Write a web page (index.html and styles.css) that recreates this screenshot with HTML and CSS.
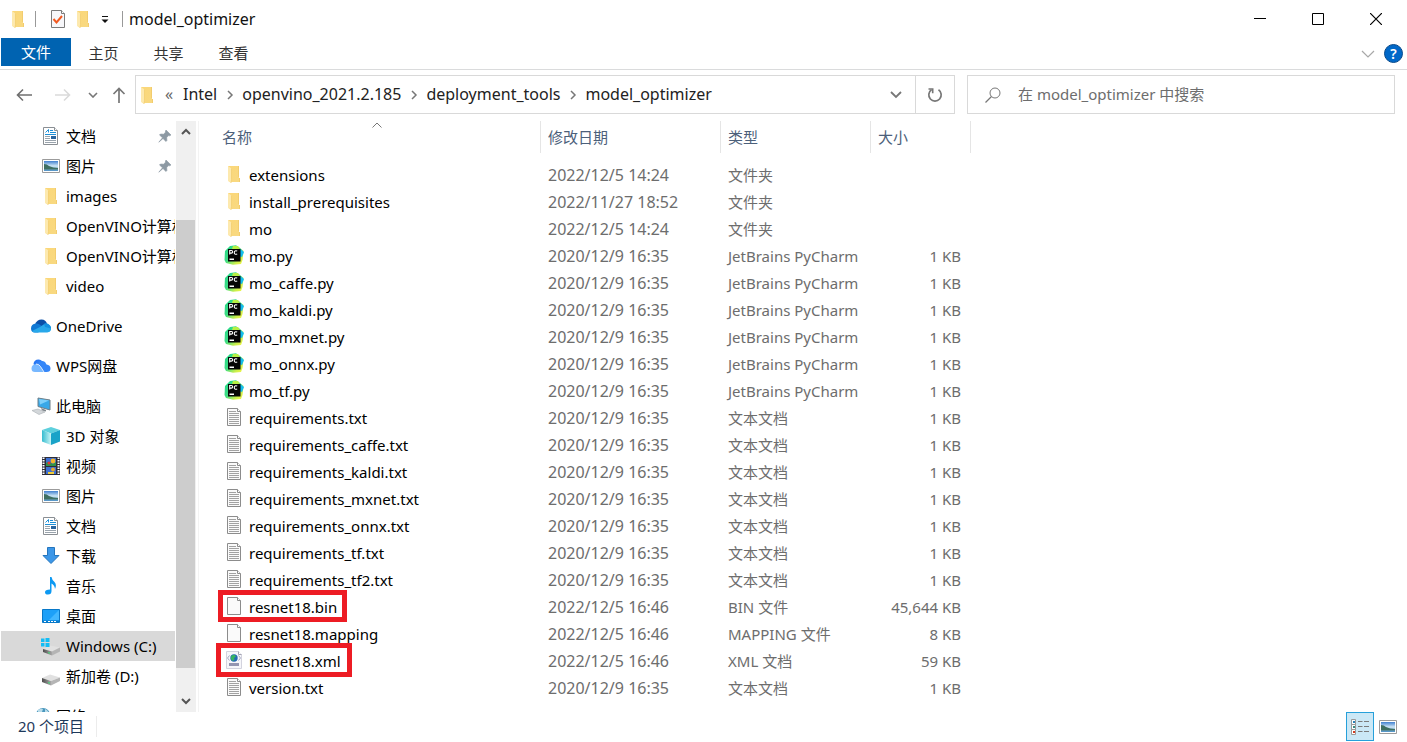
FILE: index.html
```html
<!DOCTYPE html>
<html lang="zh-CN">
<head>
<meta charset="utf-8">
<title>model_optimizer</title>
<link rel="stylesheet" href="styles.css">
</head>
<body>
<svg class="sprite" aria-hidden="true">
  <defs>
    <linearGradient id="g-folder" x1="0" y1="0" x2="1" y2="1"><stop offset="0" stop-color="#fbd778"/><stop offset="1" stop-color="#f8d982"/></linearGradient>
    <linearGradient id="g-sky" x1="0" y1="0" x2="0" y2="1"><stop offset="0" stop-color="#3f7fd0"/><stop offset=".5" stop-color="#cfe6f5"/><stop offset="1" stop-color="#4b8fc4"/></linearGradient>
    <linearGradient id="g-py" x1="0" y1="0" x2="1" y2="1"><stop offset="0" stop-color="#21d789"/><stop offset=".45" stop-color="#3ddc84"/><stop offset=".75" stop-color="#c9ee4b"/><stop offset="1" stop-color="#fcf84a"/></linearGradient>
    <linearGradient id="g-cube" x1="0" y1="0" x2="1" y2="0"><stop offset="0" stop-color="#35bcd0"/><stop offset="1" stop-color="#c9f4f5"/></linearGradient>
    <linearGradient id="g-wps" x1="0" y1="0" x2="1" y2="1"><stop offset="0" stop-color="#1c6cf0"/><stop offset="1" stop-color="#5aa6ff"/></linearGradient>
    <linearGradient id="g-drive" x1="0" y1="0" x2="1" y2="0"><stop offset="0" stop-color="#4b4b4b"/><stop offset="1" stop-color="#a9a9a9"/></linearGradient>
  </defs>
  <symbol id="folder" viewBox="0 0 20 20">
    <path d="M4 2h11v12.500l1 .5v3H5z" fill="url(#g-folder)"/>
    <path d="M14 2h1v11h-1zM15 14h1v4h-1z" fill="#f2cc6e"/>
    <path d="M4 2l3.500 2.500v11L7 19l-3-2z" fill="#fde9ae"/>
    <path d="M7.500 4.500v11L7 19" stroke="#f1cb6b" stroke-width=".7" fill="none"/>
  </symbol>
  <symbol id="txt" viewBox="0 0 20 20">
    <path d="M3.500 1.500h10l3 3v14h-13z" fill="#fafafa" stroke="#8c8c8c"/>
    <path d="M13.500 1.500v3h3" fill="#fff" stroke="#8c8c8c"/>
    <path d="M5 4.500h7M5 6.500h10M5 8.500h10M5 10.500h10M5 12.500h10M5 14.500h10M5 16.500h10" stroke="#a2a2a2"/>
  </symbol>
  <symbol id="blank" viewBox="0 0 20 20">
    <path d="M3.500 1.500h10l3 3v14h-13z" fill="#fafafa" stroke="#8c8c8c"/>
    <path d="M13.500 1.500v3h3" fill="#fff" stroke="#8c8c8c"/>
  </symbol>
  <symbol id="xml" viewBox="0 0 20 20">
    <path d="M2.500 1.500h12l3 3v14h-15z" fill="#f6f6fa" stroke="#d3d3de"/>
    <path d="M14.500 1.500v3h3" fill="#fff" stroke="#a5a5b2"/>
    <path d="M5.500 5.500L3.500 8l2 2.500M14.500 5.500L16.500 8l-2 2.500" stroke="#a5a9c0" fill="none"/>
    <circle cx="10" cy="8" r="3.700" fill="#2368b4"/>
    <path d="M7.500 5.500l3-.8 1.500 1.800-2 1.500.5 2-2 1-1.800-2.500z" fill="#35b560"/>
    <path d="M5 13h10v3H5z" fill="#9495b1"/>
  </symbol>
  <symbol id="py" viewBox="0 0 20 20">
    <path d="M1 6L6 1l6-.8L16 3l3.500 3-1 9L17 19l-8 .8L2 18 .5 15z" fill="url(#g-py)"/>
    <path d="M15 3l5 4-2 5-3-1z" fill="#13bdf0"/>
    <path d="M9 1l5 0 2 3H8z" fill="#b8ef45"/>
    <path d="M4 4h12.500v12.500H4z" fill="#050505"/>
    <path d="M5.700 9.500v-4h1.600q1.400 0 1.400 1.300T7.300 8.100H5.700M13.200 6.100q-2.800-1.100-2.900 1.400t2.900 1.500" stroke="#fff" stroke-width="1.100" fill="none"/>
    <path d="M5.500 13.500H10V15H5.500z" fill="#fff"/>
  </symbol>
  <symbol id="doc" viewBox="0 0 20 20">
    <path d="M2.500 1.500h11l3 3v14h-14z" fill="#fff" stroke="#8a8f94"/>
    <path d="M13.500 1.500v3h3" fill="#fff" stroke="#8a8f94"/>
    <path d="M4.500 6.500L7.500 3.500v3M9 4.500h3M9 6.500h6M4 8.500h11" stroke="#1e90d8" fill="none"/>
    <path d="M4 10.500h5M4 12.500h5M4 14.500h11M4 16.500h11" stroke="#9aa4ad"/>
    <path d="M10 10h5v3h-5z" fill="#28659f"/>
  </symbol>
  <symbol id="pic" viewBox="0 0 20 20">
    <path d="M1.500 3.500h17v13h-17z" fill="#fff" stroke="#9b9b9b"/>
    <path d="M3 5h14v10H3z" fill="url(#g-sky)"/>
    <path d="M3 8q3 0 5 2 4 2 9 2v1.500H3z" fill="#3f6f62"/>
  </symbol>
  <symbol id="onedrive" viewBox="0 0 20 20">
    <path d="M4 8.500Q6 3.500 10.500 3.500T16 8l-5 4z" fill="#0a4fa8"/>
    <path d="M0 12.500Q0 8 5 7.500q2-.5 5 2l5 3-8 4H4Q0 16.500 0 12.500z" fill="#0f78d4"/>
    <path d="M9 11l5-3.500q6 .5 6.200 5 0 4-4 4H4q-2 0-3-1.500z" fill="#28a8ea"/>
    <path d="M13 8q3-2 5.500 1 1.500 1.500 1.500 3.500l-6-1.500z" fill="#1490df"/>
  </symbol>
  <symbol id="wps" viewBox="0 0 20 20">
    <path d="M2.500 8Q3 3.500 7.500 3.500q3 0 4.500 3l3 9.500H8z" fill="url(#g-wps)"/>
    <path d="M7 7.500Q10 3.500 14 6l1.500 2.500q4 .5 4 4t-4 3.500h-3z" fill="#3486f8"/>
    <path d="M.5 12.500Q.5 8.500 5 8q3 0 4.500 2.500L13 16H4Q.5 16 .5 12.500z" fill="#78b8ff"/>
    <path d="M5 8q3 0 4.500 2.500L13 16" fill="none" stroke="#fff" stroke-width=".8"/>
  </symbol>
  <symbol id="pc" viewBox="0 0 20 20">
    <path d="M7 2l12 2v10L7 10.500z" fill="#38a8e8" stroke="#6f7f88"/>
    <path d="M8 3l10 1.500-9 4z" fill="#7fd0fa"/>
    <path d="M10 12l5 2v1.500l-4-1z" fill="#80878c"/>
    <path d="M1 14.500l6-1.500 7 3-6 2.500z" fill="#d3d7da" stroke="#a9afb3" stroke-width=".6"/>
  </symbol>
  <symbol id="cube" viewBox="0 0 20 20">
    <path d="M10 1l9 3-9 3.500L1 4z" fill="#5ed0dd"/>
    <path d="M1 4l9 3.500V19l-9-3.500z" fill="url(#g-cube)"/>
    <path d="M10 7.500L19 4v11.500L10 19z" fill="#1aa3c8"/>
  </symbol>
  <symbol id="film" viewBox="0 0 20 20">
    <path d="M1 1h18v18H1z" fill="#2c2d38"/>
    <path d="M2.500 1.500v18M17.500 1.500v18" stroke="#fff" stroke-width="2" stroke-dasharray="1.500 1"/>
    <path d="M5 2h10v8H5zM5 11h10v7H5z" fill="#3e70d2"/>
    <path d="M5 7q3-2 5 0t5-1v4H5z" fill="#319447"/>
    <circle cx="12" cy="5" r="2.400" fill="#f5b52a"/><circle cx="8" cy="7" r="1.500" fill="#e03c31"/>
    <circle cx="12" cy="13.500" r="2" fill="#e5a82f"/><path d="M7 16h6v2H7z" fill="#f1cd39"/>
  </symbol>
  <symbol id="down" viewBox="0 0 20 20">
    <path d="M6.500 1.500h7v8h4.500l-8 8-8-8h4.500z" fill="#3c97e8" stroke="#2475bd"/>
  </symbol>
  <symbol id="music" viewBox="0 0 20 20">
    <path d="M9 1h1.500q.5 3 3 5 2.500 3 .5 7-.3-4-3.500-5.500V15q0 3.500-3.500 3.500-3 0-3-2.300 0-2.700 5-2.700z" fill="#0d99f2"/>
  </symbol>
  <symbol id="desk" viewBox="0 0 20 20">
    <path d="M1.500 3.500h17v13h-17z" fill="#1da0f8" stroke="#0878c8"/>
    <path d="M18 4v10L8 14z" fill="#42b7ff"/>
    <path d="M2 14.500h16v1.500H2z" fill="#087dce"/><path d="M3 15.500h2M7 15.500h8" stroke="#fff" stroke-dasharray="2 1"/>
  </symbol>
  <symbol id="drive" viewBox="0 0 20 20">
    <path d="M1 12l8-3.500 10 3-9 3.500z" fill="#e1e1e1"/>
    <path d="M1 12l9 3v4.500l-9-3.500z" fill="url(#g-drive)"/>
    <path d="M10 15l9-3.500V15l-9 4.500z" fill="#b5b5b5"/>
    <path d="M7 16l2 .7v1L7 17z" fill="#3be477"/>
  </symbol>
  <symbol id="cdrive" viewBox="0 0 20 20">
    <path d="M2 13l7-3.500 10 2-8 4z" fill="#e1e1e1"/>
    <path d="M2 13l9 2.500v4L2 16z" fill="url(#g-drive)"/>
    <path d="M11 15.500l8-4v4l-8 4z" fill="#b5b5b5"/>
    <path d="M7 16l2 .7v1L7 17z" fill="#3be477"/>
    <path d="M0 2.500h3.500v3.500H0zM4.500 2H8.500v4h-4zM0 7h3.500v3.500H0zM4.500 7h4v4h-4z" fill="#14bdf5"/>
  </symbol>
  <symbol id="net" viewBox="0 0 20 20">
    <circle cx="12" cy="9" r="7" fill="#4a97bd"/>
    <path d="M7 4q3-2 5-1l-1 3-4 3zM14 3q4 2 4.500 6L14 7z" fill="#b9dcea"/>
  </symbol>
  <symbol id="pin" viewBox="0 0 14 14">
    <path d="M8 1l5 5-1.500.8-1-.2-1.800 2 .2 2.900-1 1L5 9.500.8 13.200 4.500 8.800 1.500 6l1-1 3 .2 2-1.900V2z" fill="#8c99a3" stroke="#8c99a3" stroke-width=".6"/>
  </symbol>
  <symbol id="chev-r" viewBox="0 0 8 10"><path d="M2 1l4 4-4 4" fill="none" stroke="#777" stroke-width="1.500"/></symbol>
</svg>

<header class="titlebar">
  <svg class="icon"><use href="#folder"/></svg>
  <span class="rule"></span>
  <button class="quick" aria-label="属性"><svg class="icon" viewBox="0 0 20 20"><path d="M3.500 1.500h10l3 3v14h-13z" fill="#f7f7fa" stroke="#7b7b7b"/><path d="M13.500 1.500v3h3" fill="#fff" stroke="#7b7b7b"/><path d="M5.500 10l3 3.500L14 7" fill="none" stroke="#f15a22" stroke-width="2"/></svg></button>
  <button class="quick" aria-label="新建文件夹"><svg class="icon"><use href="#folder"/></svg></button>
  <button class="quick more" aria-label="自定义快速访问工具栏"><svg width="8" height="8" viewBox="0 0 8 8"><path d="M1 1.500h6" stroke="#111"/><path d="M.5 4.500h7L4 8z" fill="#111"/></svg></button>
  <span class="rule"></span>
  <h1 class="title">model_optimizer</h1>
  <div class="window-buttons">
    <button aria-label="最小化"><svg width="12" height="12" viewBox="0 0 12 12"><path d="M0 5.500h12" stroke="#000"/></svg></button>
    <button aria-label="最大化"><svg width="12" height="12" viewBox="0 0 12 12"><path d="M.5 .5h11v11H.5z" fill="none" stroke="#000"/></svg></button>
    <button aria-label="关闭"><svg width="12" height="12" viewBox="0 0 12 12"><path d="M0 0l12 12M12 0L0 12" stroke="#000" stroke-width="1.200"/></svg></button>
  </div>
</header>

<nav class="ribbon">
  <button class="tab file">文件</button>
  <button class="tab">主页</button>
  <button class="tab">共享</button>
  <button class="tab">查看</button>
  <div class="ribbon-end">
    <button aria-label="展开功能区"><svg width="14" height="8" viewBox="0 0 14 8"><path d="M1 1l6 6 6-6" fill="none" stroke="#a8a8a8" stroke-width="1.200"/></svg></button>
    <button class="help" aria-label="帮助">?</button>
  </div>
</nav>

<div class="location">
  <div class="history">
    <button class="back" aria-label="后退"><svg width="16" height="14" viewBox="0 0 16 14"><path d="M16 7H1.500M7 1.500L1.500 7 7 12.500" fill="none" stroke="#6f6f6f" stroke-width="1.600"/></svg></button>
    <button class="forward" aria-label="前进" disabled><svg width="16" height="14" viewBox="0 0 16 14"><path d="M0 7h14.500M9 1.500L14.500 7 9 12.500" fill="none" stroke="#dadada" stroke-width="1.600"/></svg></button>
    <button class="recent" aria-label="最近位置"><svg width="10" height="6" viewBox="0 0 10 6"><path d="M1 1l4 4 4-4" fill="none" stroke="#777" stroke-width="1.600"/></svg></button>
    <button class="up" aria-label="上移"><svg width="14" height="16" viewBox="0 0 14 16"><path d="M7 16V1.500M1.500 7L7 1.500 12.500 7" fill="none" stroke="#777" stroke-width="1.700"/></svg></button>
  </div>
  <div class="address">
    <svg class="icon"><use href="#folder"/></svg>
    <span class="ellipsis">«</span>
    <a href="#">Intel</a><svg class="chev"><use href="#chev-r"/></svg>
    <a href="#">openvino_2021.2.185</a><svg class="chev"><use href="#chev-r"/></svg>
    <a href="#">deployment_tools</a><svg class="chev"><use href="#chev-r"/></svg>
    <a href="#">model_optimizer</a>
    <button class="drop" aria-label="以前的位置"><svg width="12" height="8" viewBox="0 0 12 8"><path d="M1 1l5 5 5-5" fill="none" stroke="#777" stroke-width="1.800"/></svg></button>
    <button class="refresh" aria-label="刷新"><svg width="16" height="16" viewBox="0 0 16 16"><path d="M11.500 2.800A6.200 6.200 0 1 1 4.500 2.800" fill="none" stroke="#777" stroke-width="1.700"/><path d="M1.500 2h4.200v4.200" fill="none" stroke="#777" stroke-width="1.600"/></svg></button>
  </div>
  <label class="search">
    <svg width="16" height="16" viewBox="0 0 16 16"><circle cx="10" cy="6" r="5" fill="none" stroke="#777"/><path d="M6.500 9.500L.5 15.500" stroke="#777" stroke-width="1.200"/></svg>
    <input type="text" placeholder="在 model_optimizer 中搜索" aria-label="搜索">
  </label>
</div>

<main class="content">
  <aside class="sidebar">
    <ul class="tree">
      <li><a class="sub" href="#"><svg class="icon"><use href="#doc"/></svg><span>文档</span><svg class="pin"><use href="#pin"/></svg></a></li>
      <li><a class="sub" href="#"><svg class="icon"><use href="#pic"/></svg><span>图片</span><svg class="pin"><use href="#pin"/></svg></a></li>
      <li><a class="sub" href="#"><svg class="icon"><use href="#folder"/></svg><span>images</span></a></li>
      <li><a class="sub" href="#"><svg class="icon"><use href="#folder"/></svg><span>OpenVINO计算机</span></a></li>
      <li><a class="sub" href="#"><svg class="icon"><use href="#folder"/></svg><span>OpenVINO计算机</span></a></li>
      <li><a class="sub" href="#"><svg class="icon"><use href="#folder"/></svg><span>video</span></a></li>
      <li class="group"><a href="#"><svg class="icon"><use href="#onedrive"/></svg><span>OneDrive</span></a></li>
      <li class="group"><a href="#"><svg class="icon"><use href="#wps"/></svg><span>WPS网盘</span></a></li>
      <li class="group"><a href="#"><svg class="icon"><use href="#pc"/></svg><span>此电脑</span></a></li>
      <li><a class="sub" href="#"><svg class="icon"><use href="#cube"/></svg><span>3D 对象</span></a></li>
      <li><a class="sub" href="#"><svg class="icon"><use href="#film"/></svg><span>视频</span></a></li>
      <li><a class="sub" href="#"><svg class="icon"><use href="#pic"/></svg><span>图片</span></a></li>
      <li><a class="sub" href="#"><svg class="icon"><use href="#doc"/></svg><span>文档</span></a></li>
      <li><a class="sub" href="#"><svg class="icon"><use href="#down"/></svg><span>下载</span></a></li>
      <li><a class="sub" href="#"><svg class="icon"><use href="#music"/></svg><span>音乐</span></a></li>
      <li><a class="sub" href="#"><svg class="icon"><use href="#desk"/></svg><span>桌面</span></a></li>
      <li><a class="sub selected" href="#"><svg class="icon"><use href="#cdrive"/></svg><span>Windows (C:)</span></a></li>
      <li><a class="sub" href="#"><svg class="icon"><use href="#drive"/></svg><span>新加卷 (D:)</span></a></li>
      <li class="group"><a href="#"><svg class="icon"><use href="#net"/></svg><span>网络</span></a></li>
    </ul>
    <div class="scrollbar">
      <button aria-label="向上滚动"><svg width="10" height="8" viewBox="0 0 10 8"><path d="M1 6l4-4 4 4" fill="none" stroke="#555" stroke-width="2"/></svg></button>
      <div class="track"><div class="thumb"></div></div>
      <button aria-label="向下滚动"><svg width="10" height="8" viewBox="0 0 10 8"><path d="M1 2l4 4 4-4" fill="none" stroke="#555" stroke-width="2"/></svg></button>
    </div>
  </aside>

  <section class="files">
    <table>
      <colgroup><col class="c-name"><col class="c-date"><col class="c-type"><col class="c-size"></colgroup>
      <thead>
        <tr><th>名称<svg class="sort" width="10" height="6" viewBox="0 0 10 6"><path d="M.5 5.500L5 1l4.500 4.500" fill="none" stroke="#777"/></svg></th><th>修改日期</th><th>类型</th><th>大小</th></tr>
      </thead>
      <tbody>
        <tr><td><a href="#"><svg class="icon"><use href="#folder"/></svg>extensions</a></td><td class="date">2022/12/5 14:24</td><td>文件夹</td><td></td></tr>
        <tr><td><a href="#"><svg class="icon"><use href="#folder"/></svg>install_prerequisites</a></td><td class="date">2022/11/27 18:52</td><td>文件夹</td><td></td></tr>
        <tr><td><a href="#"><svg class="icon"><use href="#folder"/></svg>mo</a></td><td class="date">2022/12/5 14:24</td><td>文件夹</td><td></td></tr>
        <tr><td><a href="#"><svg class="icon"><use href="#py"/></svg>mo.py</a></td><td class="date">2020/12/9 16:35</td><td>JetBrains PyCharm</td><td>1 KB</td></tr>
        <tr><td><a href="#"><svg class="icon"><use href="#py"/></svg>mo_caffe.py</a></td><td class="date">2020/12/9 16:35</td><td>JetBrains PyCharm</td><td>1 KB</td></tr>
        <tr><td><a href="#"><svg class="icon"><use href="#py"/></svg>mo_kaldi.py</a></td><td class="date">2020/12/9 16:35</td><td>JetBrains PyCharm</td><td>1 KB</td></tr>
        <tr><td><a href="#"><svg class="icon"><use href="#py"/></svg>mo_mxnet.py</a></td><td class="date">2020/12/9 16:35</td><td>JetBrains PyCharm</td><td>1 KB</td></tr>
        <tr><td><a href="#"><svg class="icon"><use href="#py"/></svg>mo_onnx.py</a></td><td class="date">2020/12/9 16:35</td><td>JetBrains PyCharm</td><td>1 KB</td></tr>
        <tr><td><a href="#"><svg class="icon"><use href="#py"/></svg>mo_tf.py</a></td><td class="date">2020/12/9 16:35</td><td>JetBrains PyCharm</td><td>1 KB</td></tr>
        <tr><td><a href="#"><svg class="icon"><use href="#txt"/></svg>requirements.txt</a></td><td class="date">2020/12/9 16:35</td><td>文本文档</td><td>1 KB</td></tr>
        <tr><td><a href="#"><svg class="icon"><use href="#txt"/></svg>requirements_caffe.txt</a></td><td class="date">2020/12/9 16:35</td><td>文本文档</td><td>1 KB</td></tr>
        <tr><td><a href="#"><svg class="icon"><use href="#txt"/></svg>requirements_kaldi.txt</a></td><td class="date">2020/12/9 16:35</td><td>文本文档</td><td>1 KB</td></tr>
        <tr><td><a href="#"><svg class="icon"><use href="#txt"/></svg>requirements_mxnet.txt</a></td><td class="date">2020/12/9 16:35</td><td>文本文档</td><td>1 KB</td></tr>
        <tr><td><a href="#"><svg class="icon"><use href="#txt"/></svg>requirements_onnx.txt</a></td><td class="date">2020/12/9 16:35</td><td>文本文档</td><td>1 KB</td></tr>
        <tr><td><a href="#"><svg class="icon"><use href="#txt"/></svg>requirements_tf.txt</a></td><td class="date">2020/12/9 16:35</td><td>文本文档</td><td>1 KB</td></tr>
        <tr><td><a href="#"><svg class="icon"><use href="#txt"/></svg>requirements_tf2.txt</a></td><td class="date">2020/12/9 16:35</td><td>文本文档</td><td>1 KB</td></tr>
        <tr><td><a class="marked" href="#"><svg class="icon"><use href="#blank"/></svg>resnet18.bin</a></td><td class="date">2022/12/5 16:46</td><td>BIN 文件</td><td>45,644 KB</td></tr>
        <tr><td><a href="#"><svg class="icon"><use href="#blank"/></svg>resnet18.mapping</a></td><td class="date">2022/12/5 16:46</td><td>MAPPING 文件</td><td>8 KB</td></tr>
        <tr><td><a class="marked wide" href="#"><svg class="icon"><use href="#xml"/></svg>resnet18.xml</a></td><td class="date">2022/12/5 16:46</td><td>XML 文档</td><td>59 KB</td></tr>
        <tr><td><a href="#"><svg class="icon"><use href="#txt"/></svg>version.txt</a></td><td class="date">2020/12/9 16:35</td><td>文本文档</td><td>1 KB</td></tr>
      </tbody>
    </table>
  </section>
</main>

<footer class="status">
  <span class="count">20 个项目</span>
  <div class="views">
    <button class="view active" aria-label="详细信息"><svg width="20" height="20" viewBox="0 0 20 20"><path d="M1.500 2.500h4v5h-4zM1.500 7.500h4v5h-4zM1.500 12.500h4v5h-4z" fill="#fff" stroke="#999"/><path d="M3 4h2v2H3z" fill="#2c82b8"/><path d="M3 9h2v2H3z" fill="#398c82"/><path d="M3 14h2v2H3z" fill="#d63b1f"/><path d="M8 4.500h4.500M14 4.500h5M8 9.500h4.500M14 9.500h5M8 14.500h4.500M14 14.500h5" stroke="#7b7b7b"/></svg></button>
    <button class="view" aria-label="大缩略图"><svg class="icon"><use href="#pic"/></svg></button>
  </div>
</footer>
</body>
</html>
```
FILE: styles.css
```css
* { box-sizing: border-box; }

body {
  margin: 0;
  height: 100vh;
  display: flex;
  flex-direction: column;
  overflow: hidden;
  background: #fff;
  color: #111;
  font: 15px/20px "Noto Sans", "Noto Sans CJK SC", sans-serif;
}

button {
  display: flex;
  align-items: center;
  justify-content: center;
  padding: 0;
  border: 0;
  background: none;
  font: inherit;
  color: inherit;
}

a { color: inherit; text-decoration: none; }
svg { display: block; flex: none; }
.sprite { position: absolute; width: 0; height: 0; }
.icon { width: 20px; height: 20px; }

/* Title bar */
.titlebar {
  flex: none;
  height: 38px;
  padding: 0 2px 0 8px;
  display: flex;
  align-items: center;
}
.rule { width: 1px; height: 16px; margin-left: 7px; background: #999; }
.quick { margin-left: 12px; }
.quick + .quick { margin-left: 5px; }
.quick.more { width: 16px; margin: 0 2px 0 4px; }
.title { margin: 0 0 0 6px; font: inherit; font-size: 16px; }
.window-buttons { display: flex; margin-left: auto; height: 100%; }
.window-buttons button { width: 58px; }

/* Ribbon */
.ribbon {
  flex: none;
  height: 32px;
  padding-left: 1px;
  display: flex;
  border-bottom: 1px solid #dadbdc;
  color: #333;
}
.tab { width: 65px; height: 30px; }
.tab.file { width: 70px; height: 28px; background: #0063b1; color: #fff; }
.ribbon-end { display: flex; align-items: center; gap: 9px; margin-left: auto; padding-right: 4px; }
.help {
  width: 19px;
  height: 19px;
  border: 1px solid #0a4a8a;
  border-radius: 50%;
  background: #0068c8;
  color: #fff;
  font-size: 14px;
  font-weight: 600;
  line-height: 16px;
}

/* Navigation row */
.location {
  flex: none;
  display: flex;
  padding: 5px 12px 7px 0;
}
.history { flex: none; width: 135px; display: flex; align-items: center; padding-left: 16px; }
.forward { margin-left: 23px; }
.recent { margin-left: 17px; }
.up { margin-left: 14px; }
.address {
  flex: 1;
  height: 39px;
  display: flex;
  align-items: center;
  border: 1px solid #d9d9d9;
  color: #222;
  font-size: 16px;
  line-height: 20px;
}
.address .icon { margin-left: 1px; }
.address a { padding-bottom: 2px; }
.ellipsis { width: 26px; padding: 0 0 2px 8px; color: #666; }
.chev { width: 8px; height: 10px; margin: 0 8px 0 9px; }
.drop { margin-left: auto; width: 38px; height: 100%; }
.refresh { width: 39px; height: 100%; border-left: 1px solid #d9d9d9; }
.search {
  flex: 0 1 428px;
  height: 39px;
  margin-left: 12px;
  padding-left: 17px;
  display: flex;
  align-items: center;
  gap: 17px;
  border: 1px solid #d9d9d9;
}
.search input { flex: 1; min-width: 0; padding: 0 0 2px; border: 0; outline: 0; background: none; font: inherit; }
.search input::placeholder { color: #6d6d6d; opacity: 1; }

/* Main area */
.content { flex: 1; min-height: 0; display: flex; }

.sidebar { flex: none; width: 199px; display: flex; border-right: 1px solid #f3f3f3; }
.tree { flex: 1; min-width: 0; margin: 0; padding: 0 0 0 1px; overflow: hidden; list-style: none; color: #000; }
.tree a { display: flex; align-items: center; gap: 5px; height: 30px; padding-left: 30px; white-space: nowrap; }
.tree a.sub { padding-left: 40px; }
.tree .group { margin-top: 10px; }
.tree .selected { background: #d9d9d9; }
.tree .pin { width: 14px; height: 14px; margin: 0 3px 0 auto; }
.scrollbar { flex: none; width: 20px; margin: 0 2px 0 1px; display: flex; flex-direction: column; background: #f0f0f0; }
.scrollbar button { height: 22px; }
.track { flex: 1; padding: 77px 1px 22px 0; }
.thumb { height: 100%; background: #cdcdcd; }

.files { flex: 1; min-width: 0; padding-left: 15px; overflow: hidden; }
table { width: 757px; table-layout: fixed; border-collapse: separate; border-spacing: 0; }
.c-name { width: 327px; }
.c-date { width: 180px; }
.c-type { width: 150px; }
.c-size { width: 100px; }
th {
  height: 32px;
  padding: 0 0 0 7px;
  position: relative;
  border-right: 1px solid #e5e5e5;
  color: #4c607a;
  font-weight: 400;
  text-align: left;
}
th:first-child { padding-left: 8px; }
.sort { position: absolute; top: 1px; left: 158px; }
tbody::before { content: ""; display: block; height: 8px; }
td { height: 27px; padding: 0 0 0 7px; color: #6d6d6d; white-space: nowrap; }
td:first-child { padding-left: 10px; color: #000; }
td:last-child { padding-right: 10px; text-align: right; }
td.date { font-size: 16px; }
td a { display: inline-flex; align-items: center; gap: 5px; height: 27px; vertical-align: top; }
td .icon { margin-bottom: 2px; }

/* Red callout frames around files */
.marked { position: relative; }
.marked::after {
  content: "";
  position: absolute;
  inset: -3px -10px -2px -6px;
  border: 5px solid #ed1c24;
}
.marked.wide::after { inset: -4px -11px -3px -8px; }

/* Status bar */
.status {
  flex: none;
  height: 30px;
  padding: 0 9px 1px 18px;
  display: flex;
  align-items: center;
  color: #1e395b;
}
.count { padding: 0 12px 1px 0; border-right: 1px solid #ececec; }
.views { display: flex; margin-left: auto; gap: 4px; }
.view { height: 29px; }
.view.active { width: 28px; border: 1px solid #26a0da; background: #cbe8f6; }
```
